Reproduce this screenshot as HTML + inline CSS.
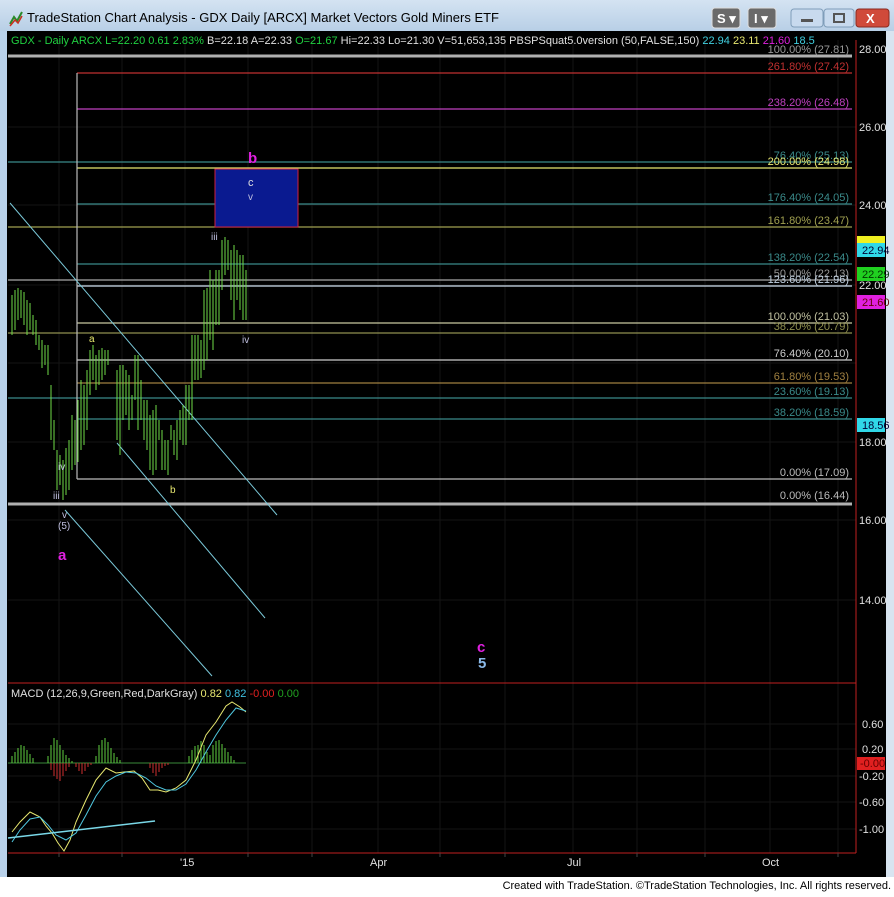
<!DOCTYPE html><html><head><meta charset="utf-8"><style>
body{margin:0;width:894px;height:892px;overflow:hidden;background:#fff;font-family:"Liberation Sans",sans-serif}
</style></head><body>
<svg width="894" height="892" xmlns="http://www.w3.org/2000/svg" font-family="Liberation Sans, sans-serif">
<defs><linearGradient id="tb" x1="0" y1="0" x2="0" y2="1"><stop offset="0" stop-color="#d4e3f2"/><stop offset="1" stop-color="#b8cfe6"/></linearGradient></defs>
<rect x="0" y="0" width="894" height="892" fill="#fff"/>
<rect x="0" y="0" width="894" height="878" fill="#b9d1ea"/>
<rect x="0" y="0" width="894" height="31" fill="url(#tb)"/>
<path d="M10 24 L14 17 L17 21 L22 12" stroke="#2a8a2a" stroke-width="2" fill="none"/><path d="M10 26 L15 20 L18 23 L22 16" stroke="#c83020" stroke-width="1.5" fill="none"/>
<text x="27" y="22" font-size="13" fill="#000">TradeStation Chart Analysis - GDX Daily [ARCX] Market Vectors Gold Miners ETF</text>
<rect x="712" y="8" width="28" height="20" rx="3" fill="#6a6a6a" stroke="#ddd"/><text x="717" y="23" font-size="13" font-weight="bold" fill="#fff">S ▾</text>
<rect x="748" y="8" width="28" height="20" rx="3" fill="#6a6a6a" stroke="#ddd"/><text x="754" y="23" font-size="13" font-weight="bold" fill="#fff">I ▾</text>
<rect x="791" y="9" width="32" height="18" rx="3" fill="#c8daee" stroke="#7f9db9"/><rect x="801" y="19" width="12" height="3" fill="#555"/>
<rect x="824" y="9" width="30" height="18" rx="3" fill="#c8daee" stroke="#7f9db9"/><rect x="834" y="14" width="10" height="8" fill="none" stroke="#555" stroke-width="2"/>
<rect x="856" y="9" width="33" height="18" rx="3" fill="#d04a3a" stroke="#8a2a20"/><text x="866" y="23" font-size="13" font-weight="bold" fill="#fff">X</text>
<rect x="7" y="31" width="880" height="846" fill="#000"/>
<rect x="886" y="31" width="8" height="846" fill="#d8e4f0"/>
<g stroke="#141414" stroke-width="1">
<path d="M8 127H856M8 205H856M8 285H856M8 363H856M8 442H856M8 520H856M8 600H856M8 724H856M8 749H856M8 776H856M8 802H856M8 829H856"/>
<path d="M59 40V853M122 40V853M185 40V853M248 40V853M312 40V853M378 40V853M440 40V853M505 40V853M573 40V853M637 40V853M705 40V853M770 40V853M838 40V853"/>
</g>
<g stroke-width="1.2" fill="none">
<path d="M8 56H852" stroke="#b0b0b0" stroke-width="3"/>
<path d="M77 73H852" stroke="#c03030"/>
<path d="M77 109H852" stroke="#c040c0"/>
<path d="M8 162H852" stroke="#3a8a8a"/>
<path d="M77 168H852" stroke="#e8e870"/>
<path d="M77 204H852" stroke="#3a8a8a"/>
<path d="M8 227H852" stroke="#a0a050"/>
<path d="M77 264H852" stroke="#3a8a8a"/>
<path d="M8 280H852" stroke="#a8a8a8"/>
<path d="M77 286H852" stroke="#d0e0f0"/>
<path d="M77 323H852" stroke="#c8c8a0"/>
<path d="M8 333H852" stroke="#909050"/>
<path d="M77 360H852" stroke="#cccccc"/>
<path d="M77 383H852" stroke="#a08040"/>
<path d="M8 398H852" stroke="#3a8a8a"/>
<path d="M77 419H852" stroke="#3a8a8a"/>
<path d="M77 479H852" stroke="#bbbbbb"/>
<path d="M8 504H852" stroke="#b0b0b0" stroke-width="3"/>
<path d="M77 73V479" stroke="#bbbbbb"/>
</g>
<g font-size="11" text-anchor="end">
<text x="849" y="53" fill="#999">100.00% (27.81)</text>
<text x="849" y="70" fill="#c03030">261.80% (27.42)</text>
<text x="849" y="106" fill="#c040c0">238.20% (26.48)</text>
<text x="849" y="159" fill="#3a8a8a">76.40% (25.13)</text>
<text x="849" y="165" fill="#e8e870">200.00% (24.98)</text>
<text x="849" y="201" fill="#3a8a8a">176.40% (24.05)</text>
<text x="849" y="224" fill="#a0a050">161.80% (23.47)</text>
<text x="849" y="261" fill="#3a8a8a">138.20% (22.54)</text>
<text x="849" y="277" fill="#999">50.00% (22.13)</text>
<text x="849" y="283" fill="#c0d0e0">123.60% (21.96)</text>
<text x="849" y="320" fill="#c0c0a0">100.00% (21.03)</text>
<text x="849" y="330" fill="#909050">38.20% (20.79)</text>
<text x="849" y="357" fill="#cccccc">76.40% (20.10)</text>
<text x="849" y="380" fill="#a08040">61.80% (19.53)</text>
<text x="849" y="395" fill="#3a8a8a">23.60% (19.13)</text>
<text x="849" y="416" fill="#3a8a8a">38.20% (18.59)</text>
<text x="849" y="476" fill="#bbbbbb">0.00% (17.09)</text>
<text x="849" y="499" fill="#bbbbbb">0.00% (16.44)</text>
</g>
<rect x="215" y="169" width="83" height="58" fill="#0a1a90" stroke="#d02040"/>
<g stroke="#7ac8d8" stroke-width="1"><path d="M10 203L277 515M117 443L265 618M65 510L212 676"/></g>
<g stroke="#70dd48" stroke-width="1">
<path d="M12 295V335M15 290V330M18 288V320M21 290V318M24 292V325M27 300V335M30 303V330M33 315V335M36 320V345M39 335V350M42 340V368M45 345V365M48 345V375M51 385V440M54 420V450M57 450V490M60 455V485M63 460V500M66 448V495M69 440V490M72 415V470M75 420V465M78 400V462M81 380V450M84 385V445M87 370V430M90 350V395M93 345V380M96 355V390M99 350V385M102 348V380M105 350V375M108 350V365M117 370V440M120 365V455M123 365V420M126 370V415M129 375V430M132 395V420M135 355V400M138 355V430M141 380V420M144 400V440M147 400V450M150 415V470M153 410V475M156 405V470M159 420V440M162 430V470M165 440V470M168 440V475M171 425V440M174 430V455M177 420V460M180 410V440M183 405V445M186 385V445M189 385V420M192 335V420M195 335V380M198 335V380M201 340V378M204 290V370M207 288V360M210 270V340M213 280V350M216 270V325M219 270V325M222 240V290M225 237V275M228 240V270M231 250V300M234 245V320M237 250V300M240 255V310M243 255V320M246 270V320"/>
</g>
<g font-size="10" fill="#c0c0e0">
<text x="211" y="240">iii</text><text x="242" y="343">iv</text><text x="58" y="470">iv</text><text x="53" y="499">iii</text><text x="62" y="518">v</text><text x="58" y="529">(5)</text>
<text x="248" y="200">v</text>
</g>
<text x="248" y="186" font-size="11" fill="#e0e0e0">c</text>
<text x="89" y="342" font-size="10" fill="#e8e870">a</text><text x="170" y="493" font-size="10" fill="#e8e870">b</text>
<g font-size="15" font-weight="bold"><text x="248" y="163" fill="#e020e0">b</text><text x="58" y="560" fill="#e020e0">a</text><text x="477" y="652" fill="#e020e0">c</text><text x="478" y="668" fill="#8ab8e8">5</text></g>
<path d="M8 683H856" stroke="#c02020"/>
<path d="M8 853H856" stroke="#c02020"/>
<path d="M856 40V853" stroke="#c02020"/>
<text x="11" y="44" font-size="11"><tspan fill="#20d040">GDX - Daily  ARCX  L=22.20  0.61  2.83%</tspan><tspan fill="#e0e0e0">  B=22.18  A=22.33  </tspan><tspan fill="#20d040">O=21.67</tspan><tspan fill="#e0e0e0">  Hi=22.33  Lo=21.30  V=51,653,135  PBSPSquat5.0version (50,FALSE,150)  </tspan><tspan fill="#40d0e0">22.94</tspan><tspan fill="#e8e870">  23.11</tspan><tspan fill="#e020e0">  21.60</tspan><tspan fill="#40d0e0">  18.5</tspan></text>
<g font-size="11" fill="#e0e0e0"><text x="859" y="53">28.00</text><text x="859" y="131">26.00</text><text x="859" y="209">24.00</text><text x="859" y="289">22.00</text><text x="859" y="446">18.00</text><text x="859" y="524">16.00</text><text x="859" y="604">14.00</text>
<text x="862" y="728">0.60</text><text x="862" y="753">0.20</text><text x="859" y="780">-0.20</text><text x="859" y="806">-0.60</text><text x="859" y="833">-1.00</text></g>
<rect x="857" y="236" width="28" height="10" fill="#f0f020"/><rect x="857" y="243" width="28" height="14" fill="#30d8e8"/><text x="862" y="254" font-size="11" fill="#003">22.94</text>
<rect x="857" y="267" width="28" height="14" fill="#20d020"/><text x="862" y="278" font-size="11" fill="#030">22.29</text>
<rect x="857" y="295" width="28" height="14" fill="#e020e0"/><text x="862" y="306" font-size="11" fill="#600">21.60</text>
<rect x="857" y="418" width="28" height="14" fill="#30d8e8"/><text x="862" y="429" font-size="11" fill="#003">18.56</text>
<rect x="857" y="757" width="28" height="13" fill="#e02020"/><text x="860" y="767" font-size="11" fill="#600">-0.00</text>
<text x="11" y="697" font-size="11"><tspan fill="#e0e0e0">MACD (12,26,9,Green,Red,DarkGray)  </tspan><tspan fill="#e8e870">0.82  </tspan><tspan fill="#40c0e0">0.82  </tspan><tspan fill="#e02020">-0.00  </tspan><tspan fill="#20a020">0.00</tspan></text>
<path d="M8 763H246" stroke="#3a8a3a"/>
<g stroke="#60d040"><path d="M12 763V756M15 763V752M18 763V748M21 763V745M24 763V746M27 763V750M30 763V754M33 763V758M48 763V756M51 763V745M54 763V738M57 763V740M60 763V745M63 763V750M66 763V755M69 763V758M72 763V761M96 763V756M99 763V745M102 763V740M105 763V738M108 763V742M111 763V748M114 763V753M117 763V757M120 763V760M189 763V756M192 763V750M195 763V746M198 763V745M201 763V741M204 763V745M207 763V752M210 763V755M213 763V745M216 763V741M219 763V740M222 763V744M225 763V748M228 763V752M231 763V756M234 763V760"/></g>
<g stroke="#d03030"><path d="M51 763V770M54 763V776M57 763V779M60 763V781M63 763V776M66 763V771M69 763V767M76 763V767M79 763V771M82 763V774M85 763V771M88 763V767M91 763V765M150 763V768M153 763V773M156 763V776M159 763V772M162 763V768M165 763V766M168 763V765"/></g>
<path d="M12 832L20 822L30 812L40 817L46 826L52 833L58 843L64 851L70 840L76 822L86 800L96 780L106 768L116 773L124 772L134 771L142 778L150 790L158 790L166 792L176 788L186 780L196 760L206 735L216 722L226 706L232 702L240 707L246 712" stroke="#e8e870" fill="none" stroke-width="1"/>
<path d="M12 842L20 830L30 819L40 817L48 825L56 835L66 840L76 833L86 815L96 796L106 782L116 776L126 772L136 773L146 778L156 786L166 790L176 790L186 784L196 770L206 752L216 735L226 720L236 708L246 711" stroke="#50c8e0" fill="none" stroke-width="1"/>
<path d="M8 838L155 821" stroke="#7ad8e8" stroke-width="1.5"/>
<g stroke="#444"><path d="M59 853V857M122 853V857M248 853V857M312 853V857M440 853V857M505 853V857M637 853V857M705 853V857M838 853V857"/></g>
<g font-size="11" fill="#e0e0e0"><text x="180" y="866">'15</text><text x="370" y="866">Apr</text><text x="567" y="866">Jul</text><text x="762" y="866">Oct</text></g>
<rect x="0" y="877" width="894" height="15" fill="#fff"/>
<text x="891" y="889" font-size="11" fill="#000" text-anchor="end">Created with TradeStation. ©TradeStation Technologies, Inc. All rights reserved.</text>
</svg>
</body></html>
